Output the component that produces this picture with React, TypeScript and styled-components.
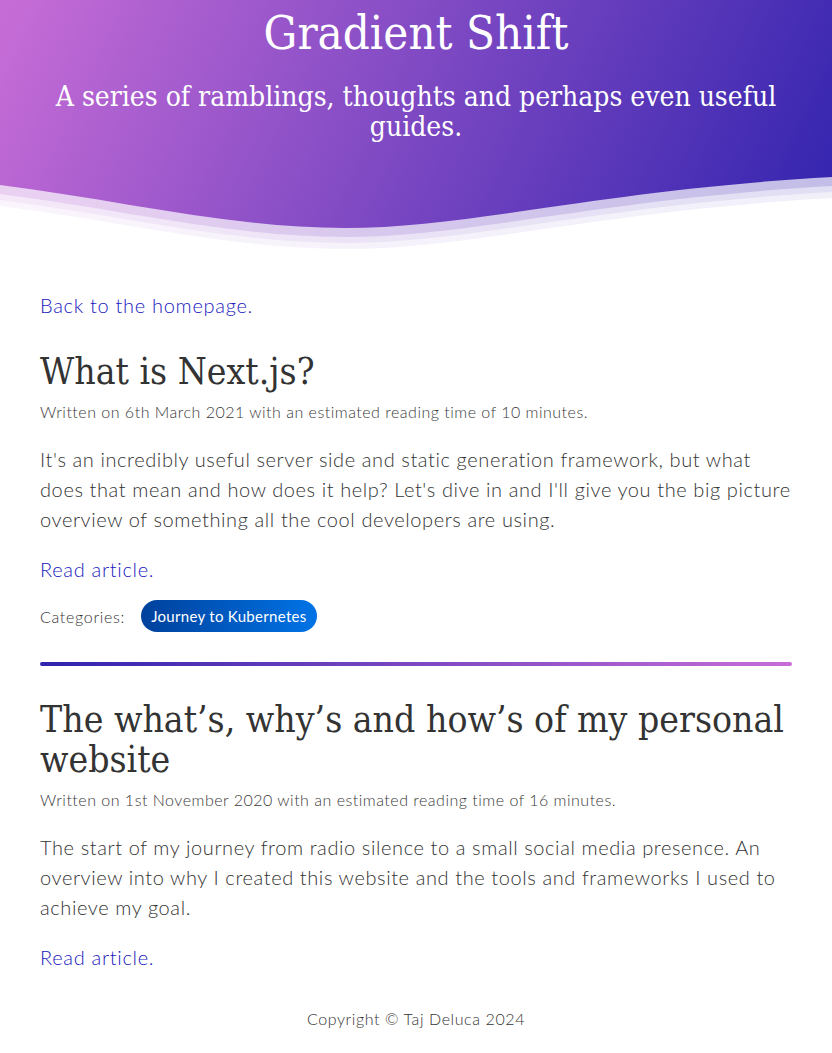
import React from "react";
import styled, { createGlobalStyle } from "styled-components";

const GlobalStyle = createGlobalStyle`
  html, body { margin: 0; padding: 0; background: #ffffff; }
  body { font-family: Lato, "Open Sans", sans-serif; color: #333333; }
  * { box-sizing: border-box; }
`;

const SERIF = `"DejaVu Serif Condensed", "DejaVu Serif", serif`;
const SANS = `Lato, "Open Sans", sans-serif`;

const Header = styled.header`
  position: relative;
  height: 250px;
  background: linear-gradient(115deg, #c86dd7 0%, #3023ae 100%);
  color: #ffffff;
  text-align: center;
  display: flex;
  flex-direction: column;
  align-items: center;
`;

const SiteTitle = styled.h1`
  margin: 5px 0 0;
  font-family: ${SERIF};
  font-stretch: condensed;
  font-weight: 400;
  font-size: 47px;
  line-height: 56px;
`;

const Tagline = styled.p`
  margin: 21px 0 0;
  max-width: 760px;
  font-family: ${SERIF};
  font-stretch: condensed;
  font-weight: 400;
  font-size: 28px;
  line-height: 30px;
`;

const Wave = styled.svg`
  position: absolute;
  left: 0;
  bottom: 0;
  width: 100%;
  height: 80px;
  display: block;
`;

const Main = styled.main`
  padding: 40px 40px 0;
  display: flex;
  flex-direction: column;
`;

const Link = styled.a<{ $mt?: number }>`
  display: block;
  margin-top: ${(p) => p.$mt ?? 0}px;
  color: #2020bd;
  text-decoration: none;
  font-family: ${SANS};
  font-weight: 300;
  font-size: 20px;
  letter-spacing: 0.7px;
  line-height: 30px;
`;

const Post = styled.article`
  display: flex;
  flex-direction: column;
`;

const PostTitle = styled.h2<{ $mt: number }>`
  margin: ${(p) => p.$mt}px 0 0;
  font-family: ${SERIF};
  font-stretch: condensed;
  font-weight: 400;
  font-size: 37px;
  line-height: 40px;
  color: #333333;
`;

const Meta = styled.p`
  margin: 9px 0 0;
  font-family: ${SANS};
  font-weight: 300;
  font-size: 16px;
  letter-spacing: 0.5px;
  line-height: 22px;
  color: #3a3a3a;
`;

const Summary = styled.p`
  margin: 21px 0 0;
  font-family: ${SANS};
  font-weight: 300;
  font-size: 20px;
  letter-spacing: 0.6px;
  line-height: 30px;
  color: #333333;
`;

const Categories = styled.div`
  margin-top: 16px;
  display: flex;
  align-items: center;
  gap: 16px;
  font-family: ${SANS};
  font-weight: 300;
  font-size: 16px;
  letter-spacing: 0.7px;
  color: #333333;
`;

const Pill = styled.span`
  display: inline-flex;
  align-items: center;
  height: 32px;
  padding: 0 10px;
  border-radius: 16px;
  background: linear-gradient(90deg, #00419c 0%, #0073e6 100%);
  color: #ffffff;
  font-family: ${SANS};
  font-weight: 400;
  font-size: 15px;
  letter-spacing: 0.3px;
`;

const Divider = styled.hr`
  margin: 30px 0 0;
  height: 4px;
  border: none;
  border-radius: 2px;
  background: linear-gradient(90deg, #3023ae 0%, #c86dd7 100%);
`;

const Footer = styled.footer`
  padding: 36px 0 24px;
  text-align: center;
  font-family: ${SANS};
  font-weight: 300;
  font-size: 16px;
  letter-spacing: 0.6px;
  line-height: 22px;
  color: #333333;
`;

const curve = (o: number) =>
  `M0 ${185 + o} C120 ${200 + o} 230 ${228 + o} 345 ${228 + o} C470 ${228 + o} 600 ${190 + o} 832 ${177 + o} L832 260 L0 260 Z`;

export default function App() {
  return (
    <>
      <GlobalStyle />
      <Header>
        <SiteTitle>Gradient Shift</SiteTitle>
        <Tagline>A series of ramblings, thoughts and perhaps even useful guides.</Tagline>
        <Wave viewBox="0 170 832 80" preserveAspectRatio="none" aria-hidden>
          <path d={curve(0)} fill="#ffffff" fillOpacity={0.7} />
          <path d={curve(9)} fill="#ffffff" fillOpacity={0.5} />
          <path d={curve(15)} fill="#ffffff" fillOpacity={0.53} />
          <path d={curve(21)} fill="#ffffff" />
        </Wave>
      </Header>
      <Main>
        <Link href="#">Back to the homepage.</Link>
        <Post>
          <PostTitle $mt={32}>What is Next.js?</PostTitle>
          <Meta>Written on 6th March 2021 with an estimated reading time of 10 minutes.</Meta>
          <Summary>
            It's an incredibly useful server side and static generation framework, but what does that
            mean and how does it help? Let's dive in and I'll give you the big picture overview of
            something all the cool developers are using.
          </Summary>
          <Link href="#" $mt={20}>Read article.</Link>
          <Categories>
            <span>Categories:</span>
            <Pill>Journey to Kubernetes</Pill>
          </Categories>
        </Post>
        <Divider />
        <Post>
          <PostTitle $mt={34}>The what’s, why’s and how’s of my personal website</PostTitle>
          <Meta>Written on 1st November 2020 with an estimated reading time of 16 minutes.</Meta>
          <Summary>
            The start of my journey from radio silence to a small social media presence. An overview
            into why I created this website and the tools and frameworks I used to achieve my goal.
          </Summary>
          <Link href="#" $mt={20}>Read article.</Link>
        </Post>
      </Main>
      <Footer>Copyright © Taj Deluca 2024</Footer>
    </>
  );
}
